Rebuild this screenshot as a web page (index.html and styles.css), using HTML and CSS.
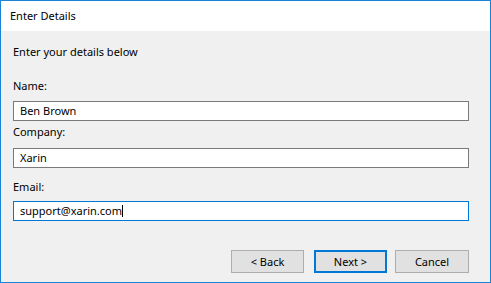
FILE: index.html
```html
<!DOCTYPE html>
<html lang="en">
<head>
  <meta charset="UTF-8">
  <title>Enter Details</title>
  <link rel="stylesheet" href="styles.css">
</head>
<body>
  <div class="window">
    <div class="titlebar">Enter Details</div>

    <div class="content">
      <p class="intro">Enter your details below</p>

      <div class="label">Name:</div>
      <div class="field">Ben Brown</div>

      <div class="label label-company">Company:</div>
      <div class="field">Xarin</div>

      <div class="label label-email">Email:</div>
      <div class="field focused">support@xarin.com<span class="caret"></span></div>

      <div class="buttons">
        <button class="btn">&lt; Back</button>
        <button class="btn btn-default">Next &gt;</button>
        <button class="btn btn-cancel">Cancel</button>
      </div>
    </div>
  </div>
</body>
</html>
```

FILE: styles.css
```css
body {
  margin: 0;
  font-family: 'Noto Sans', 'Open Sans', sans-serif;
  font-size: 11px;
  color: #000;
}
.window {
  width: 491px;
  height: 283px;
  box-sizing: border-box;
  border: 1px solid #1883d7;
  background-color: #f0f0f0;
  display: flex;
  flex-direction: column;
}
.titlebar {
  height: 30px;
  line-height: 30px;
  padding-left: 9px;
  background-color: #fff;
}
.content {
  flex: 1;
  padding: 13px 21px 0 12px;
}
.intro {
  margin: 0;
  line-height: 16px;
}
.label {
  line-height: 16px;
  margin-top: 18px;
  margin-bottom: 7px;
}
.label-company {
  margin-top: 3px;
  margin-bottom: 8px;
}
.label-email {
  margin-top: 11px;
  margin-bottom: 6px;
}
.field {
  height: 20px;
  box-sizing: border-box;
  border: 1px solid #7a7a7a;
  background-color: #fff;
  padding-left: 6px;
  line-height: 18px;
  white-space: nowrap;
}
.field.focused {
  border-color: #0078d7;
}
.caret {
  display: inline-block;
  width: 1px;
  height: 12px;
  background-color: #000;
  vertical-align: -2px;
}
.buttons {
  display: flex;
  justify-content: flex-end;
  margin-top: 29px;
}
.btn {
  width: 73px;
  height: 23px;
  box-sizing: border-box;
  border: 1px solid #adadad;
  background-color: #e1e1e1;
  font-family: inherit;
  font-size: 11px;
  color: #000;
  padding: 0;
}
.btn-default {
  margin-left: 10px;
  border: 2px solid #0078d7;
}
.btn-cancel {
  width: 74px;
  margin-left: 8px;
}
```
